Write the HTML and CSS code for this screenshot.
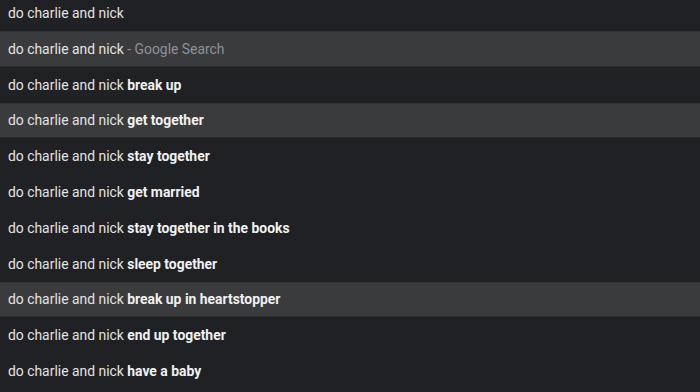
FILE: index.html
```html
<!DOCTYPE html>
<html>
<head>
<meta charset="utf-8">
<link rel="stylesheet" href="styles.css">
</head>
<body>
<div class="list">
  <div class="row first">do charlie and nick</div>
  <div class="row hl">do charlie and nick<span class="muted">&nbsp;- Google Search</span></div>
  <div class="row">do charlie and nick <b>break up</b></div>
  <div class="row hl">do charlie and nick <b>get together</b></div>
  <div class="row">do charlie and nick <b>stay together</b></div>
  <div class="row">do charlie and nick <b>get married</b></div>
  <div class="row">do charlie and nick <b>stay together in the books</b></div>
  <div class="row">do charlie and nick <b>sleep together</b></div>
  <div class="row hl">do charlie and nick <b>break up in heartstopper</b></div>
  <div class="row">do charlie and nick <b>end up together</b></div>
  <div class="row">do charlie and nick <b>have a baby</b></div>
</div>
</body>
</html>
```
FILE: styles.css
```css
html, body {
  margin: 0;
  padding: 0;
  background: #202124;
  height: 100%;
  overflow: hidden;
}
.list {
  display: flex;
  flex-direction: column;
  font-family: Roboto, "Liberation Sans", sans-serif;
  font-size: 13.9px;
  color: #e3e3e3;
}
.row {
  height: 35.8px;
  flex: none;
  display: flex;
  align-items: center;
  padding-left: 8px;
  white-space: pre;
  box-sizing: border-box;
}
.row.first {
  height: 31px;
  padding-bottom: 5px;
}
.row b {
  font-weight: 700;
  color: #f1f1f1;
}
.row.hl {
  background: #3a3b3d;
  border-top: 1px solid #333436;
  border-bottom: 1px solid #2a2b2d;
}
.muted {
  color: #8e9196;
}
```
